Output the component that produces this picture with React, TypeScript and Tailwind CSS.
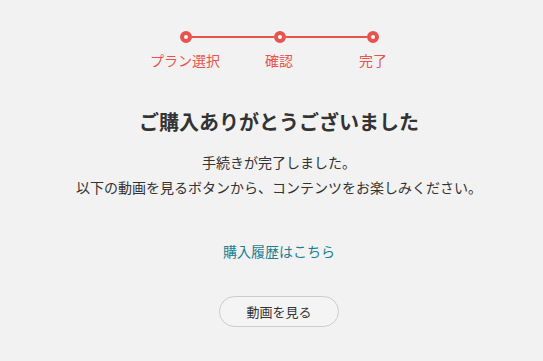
import React from 'react';

const steps = ['プラン選択', '確認', '完了'];

const Dot = () => (
  <div className="w-[12px] h-[12px] rounded-full border-[4px] border-[#e8524f] bg-white shrink-0" />
);

const App: React.FC = () => {
  return (
    <div
      className="w-full min-h-[361px] bg-[#f2f2f2] text-[#333] flex flex-col items-center pl-[15px]"
      style={{ fontFamily: '"Noto Sans CJK JP", "Noto Sans", sans-serif' }}
    >
      {/* stepper */}
      <div className="mt-[31px] flex flex-col items-center">
        <div className="flex items-center">
          <Dot />
          <div className="w-[82px] h-[2px] bg-[#e8524f]" />
          <Dot />
          <div className="w-[81px] h-[2px] bg-[#e8524f]" />
          <Dot />
        </div>
        <div className="flex mt-[7px] text-[14px] leading-[20px] text-[#e8524f]">
          {steps.map((s) => (
            <div key={s} className="w-[94px] text-center">{s}</div>
          ))}
        </div>
      </div>

      <h1 className="mt-[38px] text-[20px] leading-[28px] font-bold text-[#333]">
        ご購入ありがとうございました
      </h1>

      <div className="mt-[14px] text-[14px] leading-[25px] text-center">
        <p>手続きが完了しました。</p>
        <p>以下の動画を見るボタンから、コンテンツをお楽しみください。</p>
      </div>

      <a href="#" className="mt-[41px] text-[14px] leading-[20px] text-[#1b7f91]">
        購入履歴はこちら
      </a>

      <button className="mt-[35px] w-[120px] h-[31px] rounded-full border border-[#cccccc] bg-[#f4f4f4] text-[13px] text-[#333]">
        動画を見る
      </button>
    </div>
  );
};

export default App;
